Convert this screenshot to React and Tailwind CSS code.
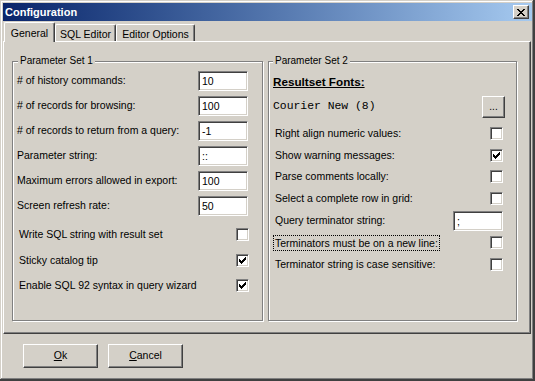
import React from "react";

const sunken =
  "bg-white border border-t-[#808080] border-l-[#808080] border-b-white border-r-white shadow-[inset_1px_1px_0_#404040,inset_-1px_-1px_0_#D4D0C8]";
const raised =
  "bg-[#D4D0C8] border border-t-white border-l-white border-b-[#404040] border-r-[#404040] shadow-[inset_-1px_-1px_0_#808080]";

function Check({ checked }) {
  return (
    <div className={`w-[13px] h-[13px] shrink-0 flex items-center justify-center ${sunken}`}>
      {checked && (
        <svg width="7" height="7" viewBox="0 0 7 7" shapeRendering="crispEdges">
          <path
            d="M0 2h1v3H0z M1 3h1v3H1z M2 4h1v3H2z M3 3h1v3H3z M4 2h1v3H4z M5 1h1v3H5z M6 0h1v3H6z"
            fill="#000"
          />
        </svg>
      )}
    </div>
  );
}

function Input({ value, w = "w-[50px]" }) {
  return (
    <div className={`${w} h-[20px] shrink-0 flex items-center pl-[3px] ${sunken}`}>
      <span className="leading-none">{value}</span>
    </div>
  );
}

function GroupBox({ title, w, labelLeft, children }) {
  return (
    <div
      className={`relative ${w} h-[260px] border border-[#808080] shadow-[inset_1px_1px_0_#fff,1px_1px_0_#fff]`}
    >
      <span className={`absolute -top-[8px] ${labelLeft} px-[2px] bg-[#D4D0C8] text-[10px] leading-[13px]`}>
        {title}
      </span>
      {children}
    </div>
  );
}

const g1Inputs = [
  ["# of history commands:", "10"],
  ["# of records for browsing:", "100"],
  ["# of records to return from a query:", "-1"],
  ["Parameter string:", "::"],
  ["Maximum errors allowed in export:", "100"],
  ["Screen refresh rate:", "50"],
];

export default function App() {
  return (
    <div className="w-[535px] h-[381px] bg-[#D4D0C8] pt-[3px] pl-[3px] pr-[3px] pb-[4px] shadow-[inset_-1px_-1px_0_#404040,inset_-2px_-2px_0_#404040,inset_1px_1px_0_#D4D0C8,inset_-3px_-3px_0_#808080,inset_2px_2px_0_#fff] font-['Liberation_Sans',Arial,sans-serif] text-[10.5px] text-black overflow-hidden">
      {/* Title bar */}
      <div className="h-[18px] mb-[1px] bg-linear-to-r from-[#0A246A] to-[#A6CAF0] flex items-center justify-between pl-[2px] pr-[3px]">
        <span className="text-white font-bold text-[11px] leading-none">Configuration</span>
        <div className={`w-[16px] h-[14px] flex items-center justify-center ${raised}`}>
          <svg width="8" height="7" viewBox="0 0 8 7" shapeRendering="crispEdges">
            <path
              d="M0 0h2v1H0z M6 0h2v1H6z M1 1h2v1H1z M5 1h2v1H5z M2 2h4v1H2z M3 3h2v1H3z M2 4h4v1H2z M1 5h2v1H1z M5 5h2v1H5z M0 6h2v1H0z M6 6h2v1H6z"
              fill="#000"
            />
          </svg>
        </div>
      </div>

      {/* Tabs */}
      <div className="h-[19px] flex items-end pl-[1px]">
        <div className="relative z-10 -mb-[1px] w-[51px] h-[20px] bg-[#D4D0C8] border-t border-l border-r border-t-white border-l-white border-r-[#404040] rounded-t-[2px] shadow-[inset_-1px_0_0_#808080] flex items-start justify-center pt-[3px]">
          <span>General</span>
        </div>
        <div className="w-[61px] h-[17px] border-t border-l border-r border-t-white border-l-white border-r-[#404040] rounded-t-[2px] shadow-[inset_-1px_0_0_#808080] flex items-start justify-center pt-[2px]">
          <span>SQL Editor</span>
        </div>
        <div className="w-[79px] h-[17px] border-t border-l border-r border-t-white border-l-white border-r-[#404040] rounded-t-[2px] shadow-[inset_-1px_0_0_#808080] flex items-start justify-center pt-[2px]">
          <span>Editor Options</span>
        </div>
      </div>

      {/* Tab panel */}
      <div className="w-[528px] h-[293px] border border-t-white border-l-white border-b-[#404040] border-r-[#404040] shadow-[inset_-1px_-1px_0_#808080] pt-[19px] pl-[8px] flex gap-[5px]">
        <GroupBox title="Parameter Set 1" w="w-[251px]" labelLeft="left-[5px]">
          <div className="flex flex-col pt-[9px] pl-[4px] pr-[14px]">
            <div className="flex flex-col gap-[5px]">
              {g1Inputs.map(([label, val]) => (
                <div key={label} className="flex items-center justify-between h-[20px]">
                  <span>{label}</span>
                  <Input value={val} />
                </div>
              ))}
            </div>
            <div className="flex items-center justify-between h-[13px] mt-[12px] pl-[2px] -mr-[1px]">
              <span>Write SQL string with result set</span>
              <Check />
            </div>
            <div className="flex items-center justify-between h-[13px] mt-[13px] pl-[2px] -mr-[1px]">
              <span>Sticky catalog tip</span>
              <Check checked />
            </div>
            <div className="flex items-center justify-between h-[13px] mt-[12px] pl-[2px] -mr-[1px]">
              <span>Enable SQL 92 syntax in query wizard</span>
              <Check checked />
            </div>
          </div>
        </GroupBox>

        <GroupBox title="Parameter Set 2" w="w-[249px]" labelLeft="left-[4px]">
          <div className="flex flex-col pt-[13px] pl-[4px] pr-[13px]">
            <div className="h-[14px] flex items-center">
              <span className="font-bold underline text-[11.7px] leading-none">Resultset Fonts:</span>
            </div>
            <div className="h-[22px] mt-[7px] flex items-center justify-between -mr-[2px]">
              <span className="font-['Liberation_Mono','Courier_New',monospace] text-[11.4px] leading-none">
                Courier New (8)
              </span>
              <div className={`w-[23px] h-[22px] flex items-end justify-center pb-[5px] ${raised}`}>
                <span className="leading-none text-[10px]">...</span>
              </div>
            </div>
            <div className="h-[13px] mt-[9px] flex items-center justify-between pl-[2px]">
              <span>Right align numeric values:</span>
              <Check />
            </div>
            <div className="h-[13px] mt-[9px] flex items-center justify-between pl-[2px]">
              <span>Show warning messages:</span>
              <Check checked />
            </div>
            <div className="h-[13px] mt-[8px] flex items-center justify-between pl-[2px]">
              <span>Parse comments locally:</span>
              <Check />
            </div>
            <div className="h-[13px] mt-[9px] flex items-center justify-between pl-[2px]">
              <span>Select a complete row in grid:</span>
              <Check />
            </div>
            <div className="h-[20px] mt-[6px] flex items-center justify-between pl-[2px]">
              <span>Query terminator string:</span>
              <Input value=";" />
            </div>
            <div className="h-[13px] mt-[5px] flex items-center justify-between">
              <span className="border border-dotted border-black px-[1px] leading-[14px]">
                Terminators must be on a new line:
              </span>
              <Check />
            </div>
            <div className="h-[13px] mt-[9px] flex items-center justify-between pl-[2px]">
              <span>Terminator string is case sensitive:</span>
              <Check />
            </div>
          </div>
        </GroupBox>
      </div>

      {/* Buttons */}
      <div className="flex mt-[10px] pl-[20px] gap-[10px]">
        <div className={`w-[75px] h-[24px] flex items-center justify-center ${raised}`}>
          <span>
            <span className="underline">O</span>k
          </span>
        </div>
        <div className={`w-[75px] h-[24px] flex items-center justify-center ${raised}`}>
          <span>
            <span className="underline">C</span>ancel
          </span>
        </div>
      </div>
    </div>
  );
}
